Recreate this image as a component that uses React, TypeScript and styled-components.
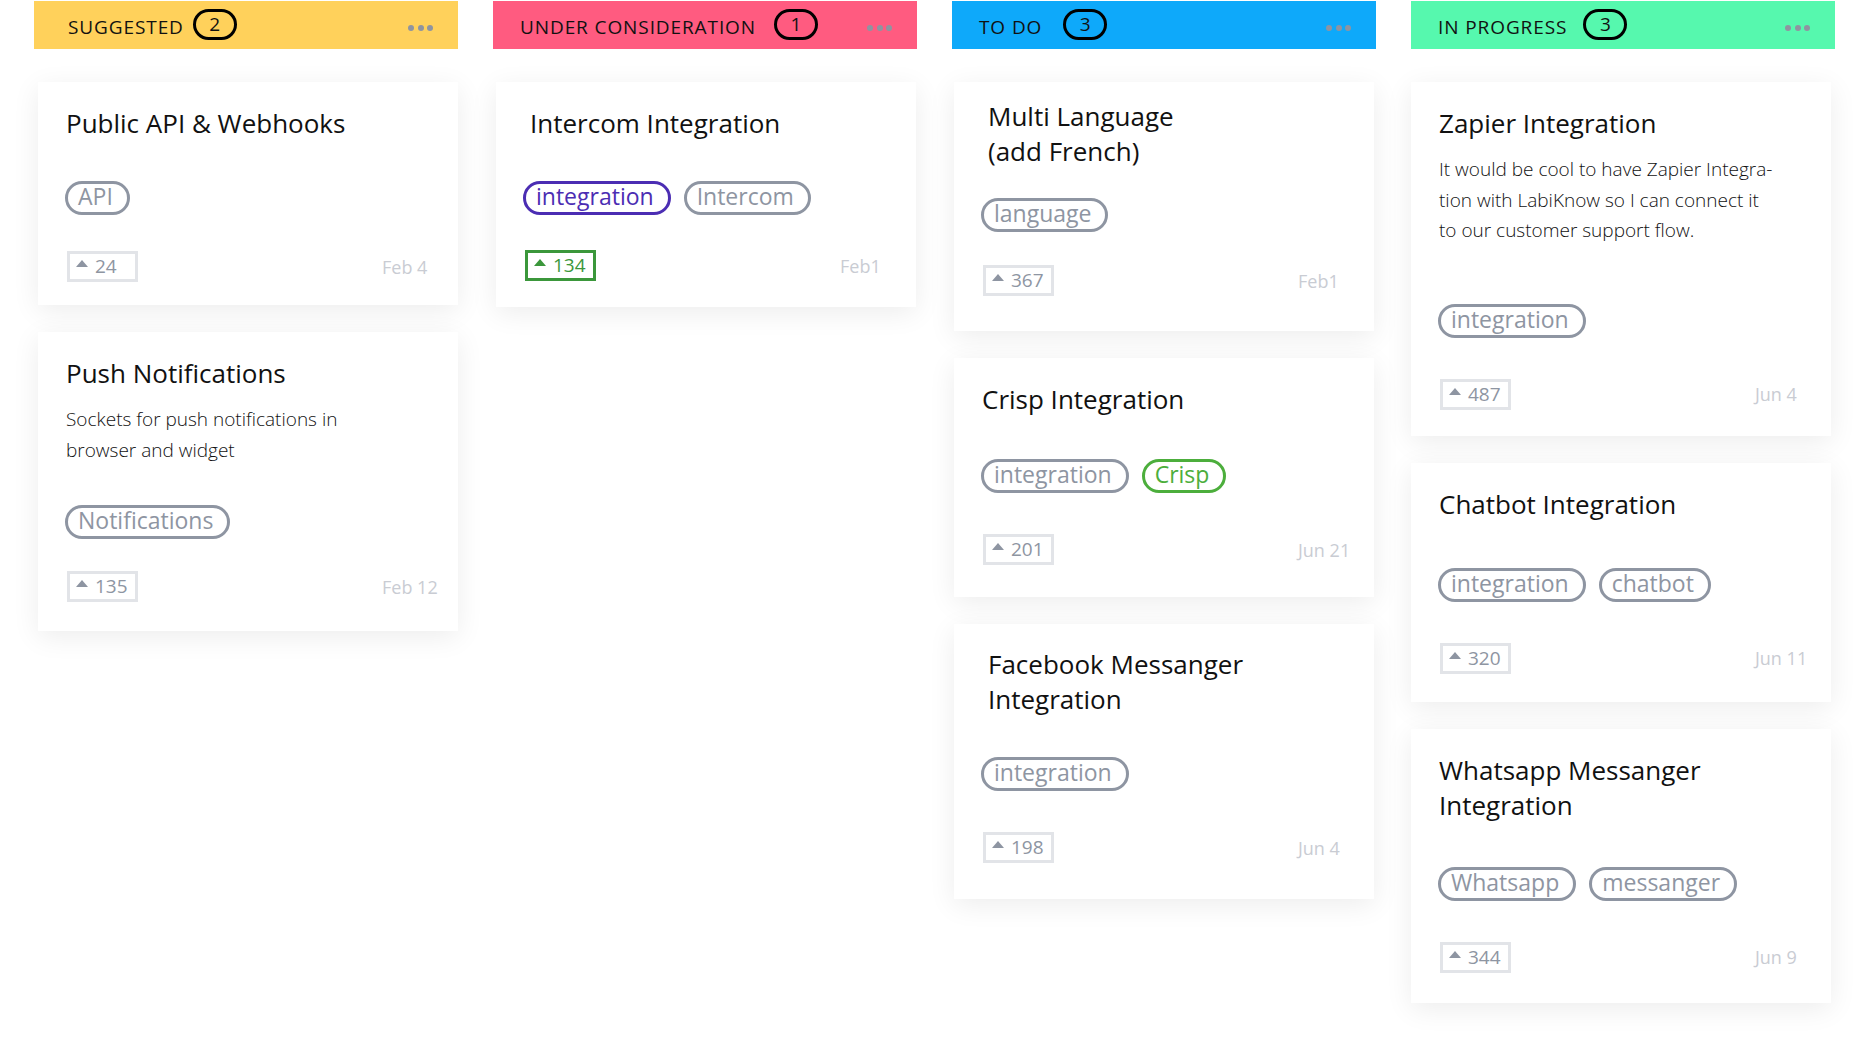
import React from 'react';
import styled, { createGlobalStyle } from 'styled-components';

type Tone = 'gray' | 'purple' | 'green';

type Tag = { label: string; tone?: Tone };

type Idea = {
  title: string[];
  text?: string[];
  tags: Tag[];
  votes: number;
  date: string;
  voted?: boolean;
  indent?: number;
  // top padding, gap before tags, gap before footer, bottom padding
  space: [number, number, number, number];
};

type Lane = {
  name: string;
  color: string;
  pad: number;
  gap: number;
  shift: number;
  items: Idea[];
};

const tones: Record<Tone, string> = {
  gray: '#8e95a2',
  purple: '#4b2db3',
  green: '#4cae3c',
};

const lanes: Lane[] = [
  {
    name: 'Suggested',
    color: '#ffd15b',
    pad: 34,
    gap: 9,
    shift: 4,
    items: [
      {
        title: ['Public API & Webhooks'],
        tags: [{ label: 'API' }],
        votes: 24,
        date: 'Feb 4',
        space: [24, 40, 36, 23],
      },
      {
        title: ['Push Notifications'],
        text: ['Sockets for push notifications in', 'browser and widget'],
        tags: [{ label: 'Notifications' }],
        votes: 135,
        date: 'Feb 12',
        space: [24, 40, 32, 29],
      },
    ],
  },
  {
    name: 'Under consideration',
    color: '#ff5b80',
    pad: 27,
    gap: 18,
    shift: 3,
    items: [
      {
        title: ['Intercom Integration'],
        tags: [{ label: 'integration', tone: 'purple' }, { label: 'Intercom' }],
        votes: 134,
        date: 'Feb1',
        voted: true,
        indent: 6,
        space: [24, 40, 35, 26],
      },
    ],
  },
  {
    name: 'To do',
    color: '#0ea9fa',
    pad: 27,
    gap: 21,
    shift: 2,
    items: [
      {
        title: ['Multi Language', '(add French)'],
        tags: [{ label: 'language' }],
        votes: 367,
        date: 'Feb1',
        indent: 6,
        space: [17, 29, 33, 35],
      },
      {
        title: ['Crisp Integration'],
        tags: [{ label: 'integration' }, { label: 'Crisp', tone: 'green' }],
        votes: 201,
        date: 'Jun 21',
        space: [24, 42, 41, 32],
      },
      {
        title: ['Facebook Messanger', 'Integration'],
        tags: [{ label: 'integration' }],
        votes: 198,
        date: 'Jun 4',
        indent: 6,
        space: [23, 40, 41, 36],
      },
    ],
  },
  {
    name: 'In progress',
    color: '#56f8ae',
    pad: 27,
    gap: 16,
    shift: 0,
    items: [
      {
        title: ['Zapier Integration'],
        text: [
          'It would be cool to have Zapier Integra-',
          'tion with LabiKnow so I can connect it',
          'to our customer support flow.',
        ],
        tags: [{ label: 'integration' }],
        votes: 487,
        date: 'Jun 4',
        space: [24, 58, 41, 26],
      },
      {
        title: ['Chatbot Integration'],
        tags: [{ label: 'integration' }, { label: 'chatbot' }],
        votes: 320,
        date: 'Jun 11',
        space: [24, 46, 41, 28],
      },
      {
        title: ['Whatsapp Messanger', 'Integration'],
        tags: [{ label: 'Whatsapp' }, { label: 'messanger' }],
        votes: 344,
        date: 'Jun 9',
        space: [24, 44, 41, 30],
      },
    ],
  },
];

const IdeaCard: React.FC<{ idea: Idea }> = ({ idea }) => {
  const [top, tagGap, footGap, bottom] = idea.space;
  return (
    <Card $top={top} $bottom={bottom}>
      <Title $indent={idea.indent ?? 0}>
        {idea.title.map((line) => (
          <span key={line}>{line}</span>
        ))}
      </Title>
      {idea.text && (
        <Text>
          {idea.text.map((line) => (
            <span key={line}>{line}</span>
          ))}
        </Text>
      )}
      <Tags $gap={tagGap}>
        {idea.tags.map((t) => (
          <Pill key={t.label} $color={tones[t.tone ?? 'gray']}>
            {t.label}
          </Pill>
        ))}
      </Tags>
      <Footer $gap={footGap}>
        <Votes $voted={!!idea.voted}>
          <Arrow />
          {idea.votes}
        </Votes>
        <DateLabel>{idea.date}</DateLabel>
      </Footer>
    </Card>
  );
};

const App: React.FC = () => {
  return (
    <>
      <GlobalStyle />
      <Board>
        {lanes.map((lane) => (
          <Column key={lane.name}>
            <Header $color={lane.color} $pad={lane.pad}>
              <HeaderTitle>{lane.name}</HeaderTitle>
              <Count $gap={lane.gap}>{lane.items.length}</Count>
              <Dots>
                <i />
                <i />
                <i />
              </Dots>
            </Header>
            <CardList $shift={lane.shift}>
              {lane.items.map((idea) => (
                <IdeaCard key={idea.title.join(' ')} idea={idea} />
              ))}
            </CardList>
          </Column>
        ))}
      </Board>
    </>
  );
};

const GlobalStyle = createGlobalStyle`
  * { box-sizing: border-box; }
  body {
    margin: 0;
    background: #ffffff;
    font-family: 'Open Sans', 'Noto Sans', sans-serif;
    color: #111;
  }
`;

const Board = styled.div`
  display: grid;
  grid-template-columns: repeat(4, 424px);
  column-gap: 35px;
  padding: 1px 0 40px 34px;
  align-items: start;
`;

const Column = styled.section`
  display: flex;
  flex-direction: column;
`;

const Header = styled.header<{ $color: string; $pad: number }>`
  height: 48px;
  display: flex;
  align-items: center;
  padding: 0 25px 0 ${(p) => p.$pad}px;
  background: ${(p) => p.$color};
`;

const HeaderTitle = styled.span`
  font-size: 19px;
  letter-spacing: 0.9px;
  text-transform: uppercase;
  color: #111;
  padding-top: 3px;
`;

const Count = styled.span<{ $gap: number }>`
  width: 44px;
  height: 31px;
  margin: -2px 0 0 ${(p) => p.$gap}px;
  border: 3px solid #000;
  border-radius: 16px;
  display: flex;
  align-items: center;
  justify-content: center;
  font-size: 19px;
  line-height: 1;
  color: #111;
`;

const Dots = styled.span`
  margin-left: auto;
  display: flex;
  gap: 3.5px;
  padding-top: 5px;

  i {
    width: 6px;
    height: 6px;
    border-radius: 50%;
    background: #8f94a0;
  }
`;

const CardList = styled.div<{ $shift: number }>`
  display: flex;
  flex-direction: column;
  gap: 27px;
  margin-top: 33px;
  padding-left: ${(p) => p.$shift}px;
`;

const Card = styled.article<{ $top: number; $bottom: number }>`
  width: 420px;
  background: #fff;
  padding: ${(p) => p.$top}px 20px ${(p) => p.$bottom}px 25px;
  box-shadow: 0 6px 26px rgba(0, 0, 0, 0.075);
  display: flex;
  flex-direction: column;
`;

const Title = styled.h3<{ $indent: number }>`
  margin: 0 0 0 ${(p) => p.$indent + 3}px;
  font-size: 26px;
  font-weight: 400;
  line-height: 35px;
  color: #111;
  display: flex;
  flex-direction: column;
`;

const Text = styled.p`
  margin: 13px 0 0 3px;
  font-size: 19px;
  font-weight: 300;
  line-height: 30.5px;
  color: #111;
  display: flex;
  flex-direction: column;
`;

const Tags = styled.div<{ $gap: number }>`
  display: flex;
  gap: 13px;
  margin: ${(p) => p.$gap}px 0 0 2px;
`;

const Pill = styled.span<{ $color: string }>`
  height: 34px;
  padding: 0 14px 0 10px;
  border: 3px solid ${(p) => p.$color};
  border-radius: 17px;
  color: ${(p) => p.$color};
  font-size: 23px;
  line-height: 25px;
`;

const Footer = styled.div<{ $gap: number }>`
  display: flex;
  align-items: center;
  margin-top: ${(p) => p.$gap}px;
`;

const Votes = styled.div<{ $voted: boolean }>`
  width: 71px;
  height: 31px;
  margin-left: 4px;
  padding-left: 6px;
  display: flex;
  align-items: center;
  gap: 7px;
  border: 3px solid ${(p) => (p.$voted ? '#3b973b' : '#e2e4e8')};
  color: ${(p) => (p.$voted ? '#3b973b' : '#8e95a2')};
  font-size: 19px;
  line-height: 25px;
`;

const Arrow = styled.span`
  width: 0;
  height: 0;
  border-left: 6px solid transparent;
  border-right: 6px solid transparent;
  border-bottom: 7px solid currentColor;
  margin-top: -6px;
`;

const DateLabel = styled.span`
  width: 56px;
  margin-left: auto;
  font-size: 18px;
  color: #c9ccd3;
  white-space: nowrap;
`;

export default App;
